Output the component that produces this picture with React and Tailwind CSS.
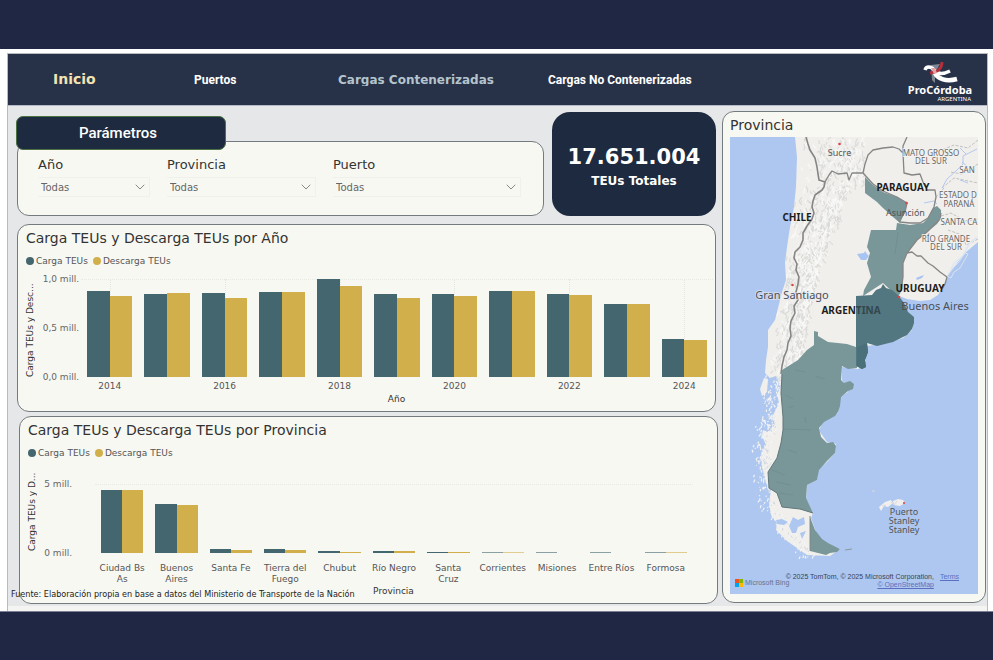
import { ChevronDown } from "lucide-react";

const YEARS = [
  { label: "2014", a: 88, b: 83 },
  { label: "", a: 85, b: 86 },
  { label: "2016", a: 86, b: 81 },
  { label: "", a: 87, b: 87 },
  { label: "2018", a: 100, b: 93 },
  { label: "", a: 85, b: 81 },
  { label: "2020", a: 85, b: 83 },
  { label: "", a: 88, b: 88 },
  { label: "2022", a: 85, b: 84 },
  { label: "", a: 75, b: 74 },
  { label: "2024", a: 39, b: 38 },
];

const PROVINCES = [
  { label: "Ciudad Bs As", a: 92, b: 92 },
  { label: "Buenos Aires", a: 71, b: 69 },
  { label: "Santa Fe", a: 6, b: 5 },
  { label: "Tierra del Fuego", a: 6, b: 5 },
  { label: "Chubut", a: 3, b: 2 },
  { label: "Río Negro", a: 3, b: 3 },
  { label: "Santa Cruz", a: 2, b: 1.5 },
  { label: "Corrientes", a: 1.5, b: 1.5, faint: true },
  { label: "Misiones", a: 1.5, b: 0, faint: true },
  { label: "Entre Ríos", a: 1.5, b: 0, faint: true },
  { label: "Formosa", a: 1.5, b: 1.5, faint: true },
];

function Logo() {
  return (
    <div className="flex w-[62px] flex-col items-center text-white">
      <svg className="h-[24px] w-[36px]" viewBox="0 0 36 24" aria-hidden="true">
        <path d="M9 4l9-1-5 9v10l-3-3z" fill="#7f8694" />
        <path d="M3 9c1-4 6-4 9 0s8 5 16 1" fill="none" stroke="#fff" strokeWidth="3.4" />
        <path d="M13 12c3 6 11 9 22 6" fill="none" stroke="#fff" strokeWidth="4.6" />
        <path d="M20 1c0 6-3 10-12 11" fill="none" stroke="#b5303a" strokeWidth="2.8" />
        <path d="M9 7l4 0 2 5-3 1z" fill="#dfa3a8" />
      </svg>
      <span className="font-['Noto_Sans',sans-serif] text-[11px] leading-[10px] font-bold">ProCórdoba</span>
      <span className="self-end font-['Noto_Sans',sans-serif] text-[6px] leading-[8px] font-normal">ARGENTINA</span>
    </div>
  );
}

function Field({ id, label, width }) {
  return (
    <div className={width}>
      <label htmlFor={id} className="block text-[13px] leading-[16px] text-[#333]">
        {label}
      </label>
      <div className="relative mt-[4px] border-y border-r border-[#f0f0ec]">
        <select
          id={id}
          className="block h-[18px] w-full appearance-none bg-transparent pl-[3px] text-[10px] text-[#666] outline-none"
        >
          <option>Todas</option>
        </select>
        <ChevronDown
          className="pointer-events-none absolute top-[1px] right-[1px] h-[16px] w-[16px] text-[#888]"
          strokeWidth={1.5}
        />
      </div>
    </div>
  );
}

function Legend() {
  return (
    <div className="mt-[8px] flex h-[12px] items-center gap-[5px] text-[9px] leading-[12px] text-[#555]">
      <span className="flex items-center gap-[2px]">
        <i className="h-[8px] w-[8px] rounded-full bg-[#43666f]" />
        Carga TEUs
      </span>
      <span className="flex items-center gap-[2px]">
        <i className="h-[8px] w-[8px] rounded-full bg-[#d1b04c]" />
        Descarga TEUs
      </span>
    </div>
  );
}

function Bars({ data, className }) {
  return (
    <div className={"relative grid grid-cols-11 " + className}>
      <div className="pointer-events-none absolute inset-x-0 top-0 border-t border-dotted border-[#e9e9e4]" />
      {data.map((d, i) => (
        <div key={i} className={"relative flex items-end px-[6px] " + (d.faint ? "opacity-60" : "")}>
          {d.label.startsWith("20") && (
            <div className="absolute inset-y-0 left-1/2 border-l border-dotted border-[#e6e6e1]" />
          )}
          <div className="relative flex-1 bg-[#43666f]" style={{ height: d.a + "%" }} />
          <div className="relative flex-1 bg-[#d1b04c]" style={{ height: d.b + "%" }} />
        </div>
      ))}
    </div>
  );
}

function AxisTitle({ children }) {
  return (
    <div className="flex w-[9px] rotate-180 items-start text-[9px] leading-[9px] whitespace-nowrap text-[#333] [writing-mode:vertical-rl]">
      {children}
    </div>
  );
}

const LAND =
  "M795 137L797 157 796 187 794 207 790 227 787 247 785 263 786 280 782 292 780 300 775 320 768 330 768 347 766 360 765 373 770 378 776 376 781 387 777 394 779 403 772 417 775 425 768 432 763 430 762 436 766 445 761 455 762 467 766 483 771 490 769 503 771 515 777 523 776 530 787 541 797 548 807 555 830 556 840 549 823 542 817 535 811 518 813 513 806 500 807 485 817 480 818 470 827 462 835 453 836 444 827 442 820 432 819 430 823 422 838 413 840 397 848 392 842 380 842 367 858 369 865 365 867 346 887 343 903 338 912 330 914 318 907 312 902 302 899 296 907 299 920 301 930 300 938 295 943 286 948 277 953 268 965 253 972 247 978 242 978 137Z";

const NORTHEAST =
  "M865 177L873 185 883 192 897 197 907 203 905 212 900 223 893 217 883 208 877 202 865 193Z M897 223L910 225 923 223 928 218 933 208 937 206 941 210 941 218 937 224 927 232 917 240 907 253 903 263 903 277 902 290 898 297 883 283 863 296 864 290 871 277 867 263 870 253 867 247 871 230 896 230Z";

const PATAGONIA =
  "M814 331L818 332 818 336 828 342 847 344 856 347 857 368 848 369 842 366 841 380 844 383 850 381 854 384 853 389 848 391 841 397 840 406 838 412 835 416 824 422 819 428 821 437 827 443 833 442 836 446 835 453 827 461 819 470 817 480 807 485 806 498 813 513 800 509 782 507 777 493 769 488 768 472 777 458 781 443 783 430 783 417 781 393 782 370 798 360 807 350 814 345Z";

const BUENOS_AIRES =
  "M856 296L872 295 876 290 881 288 883 284 886 288 892 290 898 295 904 303 908 312 914 317 914 323 912 329 907 335 893 342 877 346 867 343 868 352 865 360 866 367 862 369 856 366Z";

const ANDES =
  "M806 137L808 144 810 150 815 158 817 167 818 174 819 180 825 182 824 187 822 190 815 195 813 201 812 207 814 213 812 219 807 226 803 233 803 240 800 247 795 252 794 258 797 264 796 270 799 277 798 284 796 292 798 300 794 306 795 313 791 321 790 328 791 336 788 343 787 350 784 357 782 366 781 374";

// Seeded generator, so the relief looks the same on every render.
function makeRandom(seed) {
  let s = seed;
  return () => {
    s = (s * 16807) % 2147483647;
    return s / 2147483647;
  };
}

function reliefStrokes(seed, count) {
  const rnd = makeRandom(seed);
  const strokes = [];
  for (let i = 0; i < count; i++) {
    const y = 137 + rnd() * 240;
    const left = 798 - Math.max(0, y - 180) * 0.16;
    const span = y < 185 ? 68 : y < 260 ? 54 - (y - 185) * 0.2 : 36 - (y - 260) * 0.05;
    const x = left + Math.sqrt(rnd()) * span;
    const dx = (rnd() - 0.6) * 5;
    const dy = 1 + rnd() * 3;
    const turn = (rnd() - 0.4) * 4;
    strokes.push(
      `M${x.toFixed(1)} ${y.toFixed(1)}l${dx.toFixed(1)} ${dy.toFixed(1)} ${turn.toFixed(1)} ${(dy * 0.6).toFixed(1)}`
    );
  }
  return strokes.join("");
}

function fjordStrokes(seed, count) {
  const rnd = makeRandom(seed);
  const strokes = [];
  for (let i = 0; i < count; i++) {
    const y = 375 + rnd() * 182;
    const mid = y < 440 ? 777 - (y - 375) * 0.16 : y < 500 ? 764 + (y - 440) * 0.04 : 766 + (y - 500) * 0.75;
    const x = mid - 13 + Math.sqrt(rnd()) * 20;
    strokes.push(`M${x.toFixed(1)} ${y.toFixed(1)}l${(rnd() * 3 - 1.5).toFixed(1)} ${(rnd() * 3).toFixed(1)}`);
  }
  return strokes.join("");
}

const RELIEF_SHADE = reliefStrokes(11, 620);
const RELIEF_LIGHT = reliefStrokes(53, 420);
const FJORDS = fjordStrokes(37, 380);
const FJORD_SHADE = fjordStrokes(91, 110);

function SouthAmericaMap() {
  return (
    <svg
      className="block h-full w-full"
      viewBox="730 137 248 457"
      preserveAspectRatio="xMidYMid slice"
      role="img"
      aria-label="Mapa de Argentina por provincia"
      fontFamily="'Noto Sans', 'Open Sans', sans-serif"
    >
      <defs>
        <clipPath id="land">
          <path d={LAND} />
        </clipPath>
      </defs>
      <rect x="730" y="137" width="248" height="457" fill="#adc7f1" />
      <path d={LAND} fill="#f0efec" />
      <path d="M764 378l4 1-1 13-5 4-2-7z" fill="#f0efec" />
      <g clipPath="url(#land)" fill="none" strokeLinejoin="round">
        <path d={RELIEF_SHADE} stroke="#dadad8" strokeWidth="1.1" />
        <path d={RELIEF_LIGHT} stroke="#f8f8f7" strokeWidth="1.2" />
        <path
          d="M978 140l-10 8-14-3-12 5M978 164l-16 10-12-2M942 188l12-10 24 5M941 216l10-3 14 8 13-2M948 230l14 5 4 10 12-6M936 197l8-9"
          stroke="#b5b5b5"
          strokeWidth="0.8"
          strokeDasharray="3 1.5"
        />
        <path
          d="M977 149l-14 7 0 8-6 6-10 9-5 9M966 154l-6-6M960 180l8 3M924 203l10-2 3 3M962 162l6 5"
          stroke="#b3c7ee"
          strokeWidth="1"
        />
        <path d="M977 237l-8 7-6 12-9 7-5 11" stroke="#dde6f4" strokeWidth="1.5" />
      </g>
      <path d={FJORDS} stroke="#f3f3f3" strokeWidth="1.2" fill="none" />
      <path d={FJORD_SHADE} stroke="#c9cfdb" strokeWidth="0.8" fill="none" />
      <path d="M857 254l7-1 1-2 2 3 2 2-3 4-5 0-2-3zM916 278l5-2 3-1-2 3-5 2z" fill="#a8c4f2" />
      <path
        d="M776 520l6-1 6 3-4 3-7-1zM789 526l4-9 5 3 6-3 1 7-7 3-2 6-4 0zM800 533l6-2-4 8z"
        fill="#adc7f1"
      />
      <path d="M965 253l3 1-8 14-6 4-3 6-4-2 7-9 5-5z" fill="#adc7f1" stroke="#e4e8ee" strokeWidth="0.8" />

      <path d={NORTHEAST} fill="#799799" />
      <path d={PATAGONIA} fill="#799799" />
      <path d="M810 517l5 13 7 9 6 4 12 6-3 3-7 1-4 2-16-4z" fill="#799799" />
      <path d={BUENOS_AIRES} fill="#527780" />
      <path d="M857 347l10-4 1 9-3 8 1 7-4 2-5-3z" fill="#4a7079" />
      <path
        d="M783 429l28 1M788 450l9 3M776 482l15 3M772 470l13 5M785 395l8 4M815 376l10 3M795 370l10 2M805 417l1 6M788 408l6-2M779 493l14 2M898 232l-3 22"
        stroke="#6f8d8f"
        strokeWidth="0.8"
        fill="none"
      />
      <path
        d="M782 374l-1 19 2 24 0 13-2 13-4 15-9 14 1 16 8 5 5 14 18 2 13 4"
        stroke="#60777b"
        strokeWidth="1"
        fill="none"
      />

      <g fill="none" stroke="#858585" strokeLinejoin="round">
        <path d={ANDES} strokeWidth="1.6" />
        <path
          d="M825 182L829 175 832 171 838 174 847 173 849 180 852 173 863 173 865 164 868 155 873 150 883 148 893 147 899 149 903 153 904 173 912 175 920 174 923 182 927 190 935 190 936 197 934 207 928 218 920 223 910 223 900 222 897 217 M903 153L903 146 907 137 M863 173L873 184 883 191 897 197 907 203 905 212 900 219"
          strokeWidth="1.3"
        />
        <path
          d="M941 213L940 219 927 232 917 240 907 253 903 263 903 277 901 291 M907 253L912 252 917 256 921 256 928 263 933 266 940 272 947 277 945 284 941 291"
          strokeWidth="1.3"
        />
        <path d="M810 516v35" strokeWidth="0.9" />
      </g>
      <path d="M845 550l7-1" stroke="#8d979b" strokeWidth="1" fill="none" />

      {/* Islas Malvinas */}
      <path d="M879 507l6-5 6-2 2 3-5 4-4-1-3 5zM893 501l5-2 5 1 2 3-5 3-6-1z" fill="#f1efed" />
      <path d="M882 506l4-1M891 502l3 3 3-4M872 491h3" stroke="#d9d9dc" strokeWidth="1" fill="none" />

      <g fill="#d84747">
        <circle cx="839.5" cy="144" r="1.3" />
        <circle cx="906.5" cy="203" r="1.3" />
        <circle cx="792.5" cy="285" r="1.3" />
        <circle cx="899" cy="297" r="1.3" />
        <circle cx="904" cy="503" r="1.1" />
      </g>

      <g fill="#666" fontSize="8" textAnchor="middle" stroke="#f4f3f1" strokeWidth="1.5" paintOrder="stroke">
        <text x="931" y="156">MATO GROSSO</text>
        <text x="931" y="164">DEL SUR</text>
        <text x="967" y="173">SAN</text>
        <text x="958" y="198">ESTADO D</text>
        <text x="959" y="207">PARANÁ</text>
        <text x="959" y="225">SANTA CA</text>
        <text x="946" y="242">RÍO GRANDE</text>
        <text x="946" y="250">DEL SUR</text>
      </g>
      <g fill="#555" fontSize="9" textAnchor="middle">
        <text x="839.5" y="156">Sucre</text>
        <text x="905.5" y="216">Asunción</text>
        <text x="904" y="515">Puerto</text>
        <text x="904" y="524">Stanley</text>
        <text x="904" y="533">Stanley</text>
      </g>
      <text
        x="792"
        y="299"
        fill="#4c4f55"
        fontSize="11"
        textAnchor="middle"
        stroke="#e9edf5"
        strokeOpacity="0.6"
        strokeWidth="2"
        paintOrder="stroke"
      >
        Gran Santiago
      </text>
      <text x="935" y="310" fill="#4c4f55" fontSize="11" textAnchor="middle">
        Buenos Aires
      </text>
      <g fill="#1d1d1d" fontSize="10" fontWeight="700" textAnchor="middle">
        <text x="797" y="221">CHILE</text>
        <text x="903" y="191">PARAGUAY</text>
        <text x="920" y="292">URUGUAY</text>
        <text x="851" y="314">
          ARGEN<tspan fill="#33474c">TINA</tspan>
        </text>
      </g>
    </svg>
  );
}

const PANEL = "rounded-[12px] border border-[#747b7e] bg-[#f8f8f2] ";

export default function App() {
  return (
    <div className="flex min-h-screen flex-col bg-white font-['DejaVu_Sans',Verdana,sans-serif]">
      <div className="h-[49px] bg-[#1f2744]" />

      <main className="mt-[4px] mr-[5px] ml-[7px] border border-b-0 border-[#b9bbc1] bg-[#e6e7e8]">
        <header className="flex h-[52px] items-center border-b border-[#b4bac8] bg-[#273147] font-['Roboto',sans-serif] text-[12px] font-bold text-white">
          <nav className="flex flex-1 items-center">
            <a href="#inicio" className="ml-[45px] w-[141px] font-['DejaVu_Sans',Verdana,sans-serif] text-[14px] text-[#f3e3b3]">
              Inicio
            </a>
            <a href="#puertos" className="w-[144px]">Puertos</a>
            <a
              href="#contenerizadas"
              className="w-[210px] overflow-hidden font-['DejaVu_Sans',Verdana,sans-serif] leading-[12px] whitespace-nowrap text-[#b4c4cc]"
            >
              Cargas Contenerizadas
            </a>
            <a href="#no-contenerizadas" className="whitespace-nowrap">Cargas No Contenerizadas</a>
          </nav>
          <div className="mr-[16px] pt-[4px]">
            <Logo />
          </div>
        </header>

        <div className="flex gap-[6px] pt-[5px] pr-[1px] pl-[9px]">
          <div className="min-w-0 flex-1">
            <div className="flex items-start gap-[8px]">
              <section className="flex-1 pt-[5px]">
                <h2 className="relative z-10 -ml-[1px] flex h-[34px] w-[210px] items-center justify-center rounded-[7px] border border-[#4b7041] bg-[#1d2a40] pr-[6px] font-['Roboto',sans-serif] text-[15px] font-medium text-white">
                  Parámetros
                </h2>
                <div className={PANEL + "-mt-[9px] flex h-[75px] gap-[17px] pt-[15px] pr-[22px] pl-[20px]"}>
                  <Field id="anio" label="Año" width="w-[112px]" />
                  <Field id="provincia" label="Provincia" width="w-[149px]" />
                  <Field id="puerto" label="Puerto" width="flex-1" />
                </div>
              </section>
              <section className="mt-[1px] flex h-[104px] w-[164px] flex-col items-center justify-center rounded-[18px] bg-[#1d2a40] pt-[8px] font-bold text-white">
                <strong className="text-[21px] leading-[26px]">17.651.004</strong>
                <span className="text-[12px] leading-[22px]">TEUs Totales</span>
              </section>
            </div>

            <section className={PANEL + "mt-[8px] h-[188px] px-[8px] pt-[4px]"}>
              <h3 className="text-[14px] leading-[18px] text-[#333]">Carga TEUs y Descarga TEUs por Año</h3>
              <Legend />
              <div className="mt-[12px] flex h-[98px]">
                <AxisTitle>Carga TEUs y Desc...</AxisTitle>
                <div className="-my-[6px] flex w-[44px] flex-col items-end justify-between text-[9px] leading-[12px] text-[#666]">
                  <span>1,0 mill.</span>
                  <span>0,5 mill.</span>
                  <span>0,0 mill.</span>
                </div>
                <Bars data={YEARS} className="-mr-[6px] ml-[2px] flex-1" />
              </div>
              <div className="mt-[3px] -mr-[6px] ml-[55px] grid grid-cols-11 text-center text-[9px] leading-[12px] text-[#555]">
                {YEARS.map((d, i) => (
                  <span key={i}>{d.label}</span>
                ))}
              </div>
              <p className="mt-[1px] ml-[60px] text-center text-[9px] leading-[12px] text-[#333]">Año</p>
            </section>

            <section className={PANEL + "relative mt-[4px] -mr-[2px] ml-[2px] h-[188px] px-[8px] pt-[4px]"}>
              <h3 className="text-[14px] leading-[18px] text-[#333]">Carga TEUs y Descarga TEUs por Provincia</h3>
              <Legend />
              <div className="mt-[25px] flex h-[69px]">
                <div className="-mt-[14px] mb-[2px] flex">
                  <AxisTitle>Carga TEUs y D...</AxisTitle>
                </div>
                <div className="-my-[6px] flex w-[35px] flex-col items-end justify-between text-[9px] leading-[12px] text-[#666]">
                  <span>5 mill.</span>
                  <span>0 mill.</span>
                </div>
                <Bars data={PROVINCES} className="mr-[16px] ml-[23px] flex-1" />
              </div>
              <div className="mt-[10px] mr-[16px] ml-[67px] grid grid-cols-11 text-center text-[9px] leading-[11px] text-[#555]">
                {PROVINCES.map((d) => (
                  <span key={d.label} className="px-[3px]">{d.label}</span>
                ))}
              </div>
              <p className="ml-[50px] text-center text-[9px] leading-[12px] text-[#333]">Provincia</p>
              <p className="absolute bottom-[3px] -left-[9px] font-['DejaVu_Sans_Condensed','DejaVu_Sans',sans-serif] text-[9px] leading-[12px] whitespace-nowrap text-[#222]">
                Fuente: Elaboración propia en base a datos del Ministerio de Transporte de la Nación
              </p>
            </section>
          </div>

          <section className={PANEL + "flex h-[492px] w-[264px] flex-col px-[7px] pt-[4px] pb-[8px]"}>
            <h3 className="mb-[3px] text-[14px] leading-[18px] text-[#333]">Provincia</h3>
            <div className="relative min-h-0 flex-1 overflow-hidden">
              <SouthAmericaMap />
              <div className="absolute bottom-[6px] left-[5px] flex items-center gap-[2px] font-['Liberation_Sans',Arial,sans-serif] text-[7px] text-[#68728a]">
                <span className="grid grid-cols-2">
                  <i className="h-[4px] w-[4px] bg-[#f25022]" />
                  <i className="h-[4px] w-[4px] bg-[#7fba00]" />
                  <i className="h-[4px] w-[4px] bg-[#00a4ef]" />
                  <i className="h-[4px] w-[4px] bg-[#ffb900]" />
                </span>
                Microsoft Bing
              </div>
              <div className="absolute right-[19px] bottom-[5px] flex gap-[6px] text-right font-['Liberation_Sans',Arial,sans-serif] text-[7px] leading-[8px] whitespace-nowrap text-[#3c4352]">
                <span>
                  © 2025 TomTom, © 2025 Microsoft Corporation,
                  <br />
                  <a href="#osm" className="text-[#5b6fc0] underline">© OpenStreetMap</a>
                </span>
                <a href="#terms" className="text-[#5b6fc0] underline">Terms</a>
              </div>
            </div>
          </section>
        </div>
        <div className="mt-[2px] h-[5px] bg-[#f4f4f2]" />
      </main>

      <footer className="flex-1 border-t border-[#7b8094] bg-[#1f2744]" />
    </div>
  );
}
